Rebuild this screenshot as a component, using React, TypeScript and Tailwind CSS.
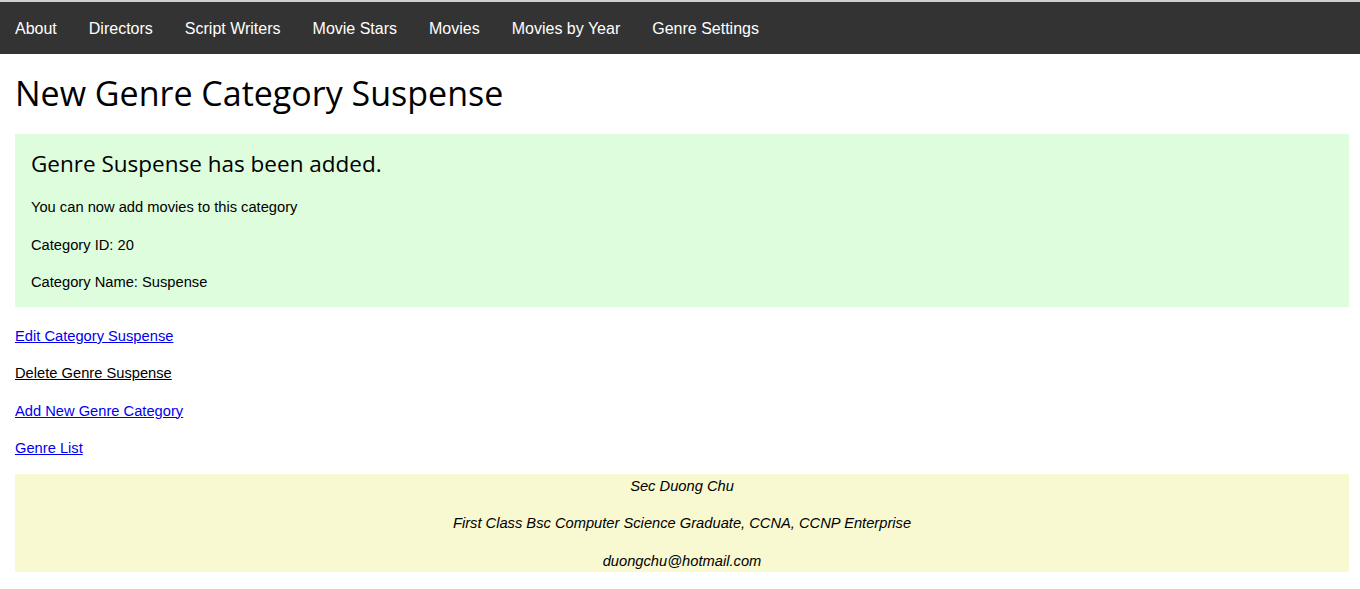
export default function App() {
  const navItems = ["About", "Directors", "Script Writers", "Movie Stars", "Movies", "Movies by Year", "Genre Settings"]

  return (
    <div className="min-h-screen bg-white font-['Liberation_Sans',Arial,sans-serif] text-[14.7px] text-black">
      <nav className="flex h-[54px] items-center border-t-2 border-[#d0d0d0] bg-[#333333] pt-[1px]">
        {navItems.map((item) => (
          <a key={item} href="#" className="px-4 text-[16px] leading-[18px] text-white first:pl-[15px]">
            {item}
          </a>
        ))}
      </nav>

      <div className="ml-[15px] mr-[11px]">
        <h1 className="mt-[16px] mb-[18px] font-['Open_Sans',sans-serif] text-[34px] leading-[46px]">
          New Genre Category Suspense
        </h1>

        <div className="bg-[#ddfddd] px-4 pt-[14px] pb-[13px]">
          <h3 className="mb-[17px] font-['Open_Sans',sans-serif] text-[22.5px] leading-[32px]">
            Genre Suspense has been added.
          </h3>
          <p className="leading-[21.5px]">You can now add movies to this category</p>
          <p className="mt-4 leading-[21.5px]">Category ID: 20</p>
          <p className="mt-4 leading-[21.5px]">Category Name: Suspense</p>
        </div>

        <div className="mt-[19px] flex flex-col items-start gap-4 leading-[21.5px]">
          <a href="#" className="text-[#0000ee] underline">Edit Category Suspense</a>
          <a href="#" className="text-black underline">Delete Genre Suspense</a>
          <a href="#" className="text-[#0000ee] underline">Add New Genre Category</a>
          <a href="#" className="text-[#0000ee] underline">Genre List</a>
        </div>

        <footer className="mt-[14px] flex flex-col gap-4 bg-[#f8f8d1] pt-[2px] text-center italic leading-[21.5px]">
          <p>Sec Duong Chu</p>
          <p>First Class Bsc Computer Science Graduate, CCNA, CCNP Enterprise</p>
          <p>duongchu@hotmail.com</p>
        </footer>
      </div>
    </div>
  )
}
